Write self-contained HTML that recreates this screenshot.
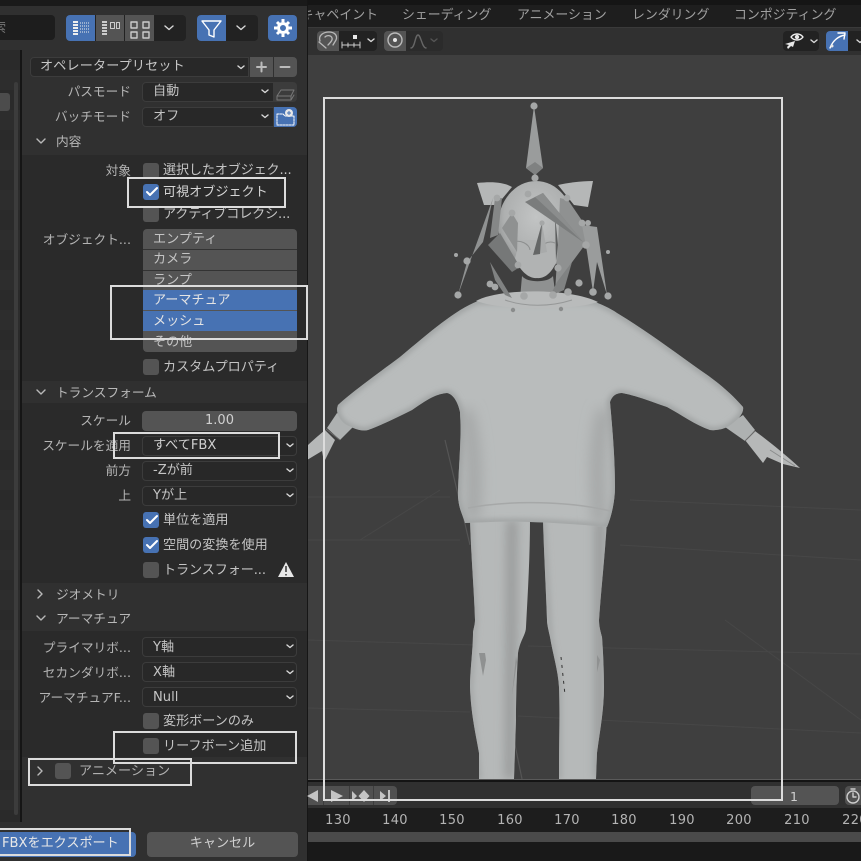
<!DOCTYPE html>
<html lang="ja"><head><meta charset="utf-8"><title>FBX</title>
<style>
html,body{margin:0;padding:0;background:#3f3f3f;}
#r{position:relative;width:861px;height:861px;overflow:hidden;font-family:"DejaVu Sans","Noto Sans CJK JP",sans-serif;font-size:13.1px;color:#c4c4c4;}
#r div{position:absolute;box-sizing:border-box;}
.t{white-space:nowrap;line-height:16px;height:16px;margin-top:1px;}
.h{font-size:12.7px;color:#b8b8b8;}
.l{white-space:nowrap;line-height:16px;height:16px;right:730px;color:#b4b4b4;text-align:right;font-size:12.7px;margin-top:1px;}
.c{left:143px;width:16px;height:16px;background:#545454;border-radius:3px;}
.k{background:#4772b3;}
.d{left:142px;width:155px;height:20px;background:#282828;border:1px solid #3c3c3c;border-radius:4px;}
.w{border:2px solid #dcdcdc;}
.tab{white-space:nowrap;line-height:16px;height:16px;top:8px;color:#a0a0a0;font-size:12.9px;}
.n{top:813px;line-height:16px;height:16px;width:40px;text-align:center;color:#b4b4b4;font-size:13px;letter-spacing:.3px;}
svg{position:absolute;left:0;top:0;}
</style></head><body><div id="r">

<!-- viewport -->
<div style="left:308px;top:0;width:553px;height:861px;background:#3f3f3f"></div>
<svg width="861" height="861" viewBox="0 0 861 861">
<defs>
<filter id="b"><feGaussianBlur stdDeviation="7"/></filter>
<filter id="b2"><feGaussianBlur stdDeviation="3"/></filter>
<filter id="b3" x="-50%" width="200%"><feGaussianBlur stdDeviation="5"/></filter>
<radialGradient id="hd" cx=".5" cy=".4" r=".6"><stop offset="0" stop-color="#c2c4c4"/><stop offset=".7" stop-color="#aeb0b0"/><stop offset="1" stop-color="#8b8d8d"/></radialGradient>
<clipPath id="sw"><path id="swp" d="M478 301C455 310 430 332 400 357C380 372 352 392 338 405C335 413 340 420 345 424C352 428 362 432 368 430C382 425 398 417 412 410C424 402 434 394 447 393C453 394 458 402 460 412C462 440 458 470 458 497C459 510 463 515 465 523C490 522 510 521 530 522C560 523 585 525 607 527C612 515 615 500 615 487C615 455 612 425 610 402C612 396 616 393 622 393C638 396 652 402 667 407C682 415 695 425 710 430C718 431 728 428 733 423C740 418 744 412 743 407C730 392 715 380 700 370C672 350 645 330 617 313C610 308 600 304 593 301Z"/></clipPath>
<clipPath id="lg"><path d="M470 520C471 555 474 590 475 620C475 625 473 630 473 633C473 650 470 670 470 687C471 715 476 735 479 753L479 779L514 779L516 720C516 695 517 670 518 653C520 640 526 635 526 627C528 590 530 555 530 520ZM543 520C544 555 546 590 547 620C547 625 549 632 550 637C553 655 558 670 559 687C560 715 559 740 559 767L559 779L596 779L597 753C600 730 604 710 604 687C604 670 603 650 602 637C600 630 599 625 599 620C601 590 605 555 607 520Z"/></clipPath>
</defs>
<rect x="308" y="27" width="553" height="28" fill="#303030"/>
<g stroke="#474747" stroke-width="1" fill="none">
<path d="M308 497H450M630 500L861 510M308 540H460M620 545L861 560M308 640L475 645M528 646L861 654M308 708L470 712M518 716L861 733M725 620L861 720M360 540L440 490"/>
</g>
<path d="M445 440L470 545M514 740L522 779" stroke="#555" stroke-width="1.200" fill="none"/>
<!-- hands -->
<path d="M325 430C318 436 312 441 307 446V460L322 451L324 462L335 440Z" fill="#b6b8b8"/>
<path d="M755 431C770 442 787 456 800 468L783 464L767 457L763 463L745 440Z" fill="#b6b8b8"/>
<path d="M770 450L795 466" stroke="#8a8c8c" fill="none"/>
<path d="M337 413L327 428L340 440L353 427Z" fill="#aeb1b1"/>
<path d="M743 415L755 430L745 441L725 427Z" fill="#aeb1b1"/>
<path d="M326 429L340 440M755 431L745 441" stroke="#6a6a6a" fill="none"/>
<!-- legs -->
<g clip-path="url(#lg)">
<rect x="460" y="515" width="160" height="265" fill="#b6b9b9"/>
<path d="M512 520L510 779M600 520L600 779" stroke="#989a9a" stroke-width="10" fill="none" filter="url(#b3)"/>
<path d="M470 520L475 620L470 687L479 779M543 520L550 637L559 687L559 779" stroke="#a2a4a4" stroke-width="5" fill="none" filter="url(#b2)"/>
<path d="M479 772H515M559 772H597" stroke="#cfd1d1" stroke-width="5" filter="url(#b2)"/>
</g>
<path d="M479 653L483 676L486 660L485 653ZM516 656L512 695L517 662ZM597 655L597 672L600 660Z" fill="#8f9191"/>
<path d="M561 657L565 695" stroke="#333" stroke-width="1" stroke-dasharray="3 5"/>
<!-- hair back + head -->
<path d="M477 183C495 181 505 183 512 187L497 205L484 205Z" fill="#b5b7b7"/>
<path d="M593 181C580 181 567 183 558 185L574 205L588 207Z" fill="#b5b7b7"/>
<ellipse cx="536" cy="226" rx="38" ry="45" fill="url(#hd)"/>
<path d="M515 258C520 272 530 279 537 278C545 279 553 272 558 258L552 240H520Z" fill="#b1b3b3"/>
<path d="M522 276C527 283 548 283 553 276L556 299C545 303 530 303 520 299Z" fill="#8f9191"/>
<path d="M512 243C520 238 530 245 530 250M555 243C548 240 540 245 540 250" stroke="#8c8e8e" fill="none"/>
<!-- sweater -->
<g clip-path="url(#sw)">
<rect x="330" y="295" width="420" height="240" fill="#b9bcbc"/>
<use href="#swp" fill="none" stroke="#9a9d9d" stroke-width="5" filter="url(#b2)"/>
<path d="M465 410C474 440 476 480 472 520M605 410C596 440 596 480 600 525" stroke="#a0a3a3" stroke-width="12" fill="none" filter="url(#b)"/>
<path d="M468 508C510 500 570 501 610 511" stroke="#a6a8a8" stroke-width="1.500" fill="none"/>
</g>
<path d="M476 301C500 288 570 288 598 302C570 311 505 311 476 301Z" fill="#b9bbbb"/>
<path d="M505 300C525 307 550 307 572 300" stroke="#969898" fill="none"/>
<!-- bones -->
<g fill="#8f9191">
<path d="M534 106L543 168L535 175L526 168Z" fill="#9a9c9c"/>
<path d="M526 168L535 175L543 168L535 162Z" fill="#7f8181"/>
<path d="M493 198L458 295L467 262L483 242L487 225Z"/>
<path d="M495 198L502 198L498 235L490 238Z" fill="#858787"/>
<path d="M512 213L518 223L517 252L502 228Z"/>
<path d="M560 198L568 200L585 225L587 242L570 265L555 292L558 245Z"/>
<path d="M582 225L597 227L607 295L597 262L593 292L587 252Z" fill="#9a9c9c"/>
<path d="M490 262L512 298L505 295L495 280Z" fill="#808282"/>
<path d="M557 282L572 262L564 290L550 296Z" fill="#808282"/>
<path d="M555 215L558 245L556 262Z" fill="#5c5e5e"/>
<path d="M500 233L488 245L512 272L520 267Z" fill="#767878"/>
<path d="M525 202L543 193L583 242Z" fill="#7a7c7c"/>
<path d="M543 193L583 242L535 197Z" fill="#8b8d8d"/>
<path d="M542 223L533 255L547 252Z" fill="#a8aaaa"/>
<path d="M542 223L533 255L540 254Z" fill="#646666"/>
</g>
<g fill="#a5a7a7">
<circle cx="534" cy="106" r="3.600"/><circle cx="535" cy="178" r="3.600"/><circle cx="497" cy="198" r="3.400"/><circle cx="528" cy="194" r="3.400"/><circle cx="567" cy="198" r="3.400"/><circle cx="512" cy="213" r="3.400"/><circle cx="542" cy="223" r="2.600"/><circle cx="582" cy="223" r="3.400"/><circle cx="588" cy="223" r="3"/><circle cx="586" cy="245" r="3.800"/><circle cx="467" cy="261" r="3.600"/><circle cx="456" cy="255" r="2"/><circle cx="608" cy="252" r="2"/><circle cx="558" cy="268" r="3.600"/><circle cx="518" cy="265" r="3.400"/><circle cx="458" cy="295" r="3.600"/><circle cx="608" cy="296" r="3.600"/><circle cx="593" cy="292" r="3.800"/><circle cx="579" cy="283" r="3.600"/><circle cx="568" cy="292" r="3.800"/><circle cx="553" cy="295" r="3.800"/><circle cx="524" cy="296" r="3.800"/><circle cx="490" cy="284" r="3.400"/><circle cx="495" cy="287" r="3.400"/><circle cx="513" cy="310" r="2.200" fill="#8a8c8c"/><circle cx="561" cy="309" r="2.200" fill="#8a8c8c"/>
</g>
<!-- timeline bars -->
<rect x="308" y="779" width="553" height="1" fill="#5a5a5a"/>
<rect x="308" y="780" width="553" height="2" fill="#141414"/>
<rect x="308" y="782" width="553" height="26" fill="#303030"/>
<rect x="308" y="808" width="553" height="24" fill="#1d1d1d"/>
<rect x="308" y="832" width="553" height="10" fill="#4a4a4a"/>
<rect x="308" y="842" width="553" height="19" fill="#191919"/>
<rect x="308" y="0" width="553" height="5" fill="#151515"/>
<rect x="308" y="5" width="553" height="22" fill="#1e1e1e"/>
<rect x="308" y="27" width="553" height="1" fill="#3a3a3a"/>
</svg>

<!-- tabs -->
<div class="tab" style="left:304px;width:74px;overflow:hidden;direction:rtl;">キャペイント</div>
<div class="tab" style="left:402px">シェーディング</div>
<div class="tab" style="left:517px">アニメーション</div>
<div class="tab" style="left:632px">レンダリング</div>
<div class="tab" style="left:734px">コンポジティング</div>

<!-- header buttons -->
<div style="left:317px;top:31px;width:60px;height:20px;background:#222;border-radius:4px"></div>
<div style="left:317px;top:31px;width:22px;height:20px;background:#545454;border-radius:4px 0 0 4px"></div>
<div style="left:384px;top:31px;width:59px;height:20px;background:#2b2b2b;border-radius:4px"></div>
<div style="left:384px;top:31px;width:22px;height:20px;background:#545454;border-radius:4px 0 0 4px"></div>
<div style="left:783px;top:31px;width:36px;height:20px;background:#222;border-radius:4px"></div>
<div style="left:826px;top:31px;width:35px;height:20px;background:#222;border-radius:4px 0 0 4px"></div>
<div style="left:826px;top:31px;width:22px;height:20px;background:#4772b3;border-radius:4px 0 0 4px"></div>

<!-- transport -->
<div style="left:308px;top:786px;width:89px;height:19px;background:#505050;border-radius:0 4px 4px 0"></div>
<div style="left:323px;top:786px;width:1px;height:19px;background:#3c3c3c"></div>
<div style="left:349px;top:786px;width:1px;height:19px;background:#3c3c3c"></div>
<div style="left:373px;top:786px;width:1px;height:19px;background:#3c3c3c"></div>
<div style="left:751px;top:786px;width:88px;height:19px;background:#545454;border-radius:4px"></div>
<div class="t" style="left:790px;top:788px;font-size:12.500px;color:#d0d0d0">1</div>
<div style="left:845px;top:786px;width:20px;height:19px;background:#505050;border-radius:4px"></div>
<div class="n" style="left:318px">130</div><div class="n" style="left:375px">140</div><div class="n" style="left:432px">150</div><div class="n" style="left:490px">160</div><div class="n" style="left:547px">170</div><div class="n" style="left:604px">180</div><div class="n" style="left:662px">190</div><div class="n" style="left:719px">200</div><div class="n" style="left:777px">210</div><div class="n" style="left:835px">220</div>

<!-- left panel -->
<div style="left:0;top:0;width:308px;height:861px;background:#303030"></div>
<div style="left:0;top:0;width:308px;height:6px;background:#1a1a1a"></div>
<div style="left:307px;top:0;width:1px;height:861px;background:#161616"></div>
<div style="left:0;top:50px;width:20px;height:772px;background:repeating-linear-gradient(#2a2a2a 0,#2a2a2a 20px,#2d2d2d 20px,#2d2d2d 40px)"></div>
<div style="left:14px;top:82px;width:4px;height:733px;background:#3c3c3c;border-radius:2px"></div>
<div style="left:0;top:93px;width:10px;height:18px;background:#4c4c4c;border-radius:0 3px 3px 0"></div>
<div style="left:20px;top:50px;width:2px;height:772px;background:#151515"></div>
<div style="left:22px;top:155px;width:285px;height:226px;background:#2a2a2a"></div>
<div style="left:22px;top:403px;width:285px;height:180px;background:#2a2a2a"></div>
<div style="left:22px;top:631px;width:285px;height:126px;background:#2a2a2a"></div>

<!-- top buttons -->
<div style="left:0;top:15px;width:55px;height:25px;background:#1d1d1d;border-radius:0 4px 4px 0"></div>
<div class="t" style="left:-7px;top:20px;color:#777">索</div>
<div style="left:66px;top:15px;width:120px;height:26px;background:#222;border-radius:4px"></div>
<div style="left:66px;top:15px;width:29px;height:26px;background:#4772b3;border-radius:4px 0 0 4px"></div>
<div style="left:96px;top:15px;width:28px;height:26px;background:#545454"></div>
<div style="left:125px;top:15px;width:29px;height:26px;background:#545454"></div>
<div style="left:197px;top:15px;width:61px;height:26px;background:#222;border-radius:4px"></div>
<div style="left:197px;top:15px;width:29px;height:26px;background:#4772b3;border-radius:4px 0 0 4px"></div>
<div style="left:268px;top:15px;width:29px;height:26px;background:#4772b3;border-radius:4px"></div>

<!-- presets -->
<div style="left:30px;top:57px;width:219px;height:20px;background:#282828;border:1px solid #3c3c3c;border-radius:4px 0 0 4px"></div>
<div class="t" style="left:40px;top:58px;color:#c8c8c8;letter-spacing:.15px">オペレータープリセット</div>
<div style="left:250px;top:57px;width:23px;height:20px;background:#545454"></div>
<div style="left:274px;top:57px;width:23px;height:20px;background:#545454;border-radius:0 4px 4px 0"></div>

<div class="l" style="top:83px">パスモード</div>
<div class="d" style="top:82px;width:132px;border-radius:4px 0 0 4px"></div>
<div class="t" style="left:153px;top:83px">自動</div>
<div style="left:274px;top:82px;width:23px;height:20px;background:#3c3c3c;border-radius:0 4px 4px 0"></div>
<div class="l" style="top:108px">バッチモード</div>
<div class="d" style="top:107px;width:132px;border-radius:4px 0 0 4px"></div>
<div class="t" style="left:153px;top:108px">オフ</div>
<div style="left:274px;top:107px;width:23px;height:20px;background:#4772b3;border-radius:0 4px 4px 0"></div>

<div class="t h" style="left:56px;top:133px">内容</div>
<div class="l" style="top:162px">対象</div>
<div class="c" style="top:163px"></div><div class="t" style="left:163px;top:162px;letter-spacing:-.15px">選択したオブジェク...</div>
<div class="c k" style="top:184px"></div><div class="t" style="left:163px;top:184px;color:#d6d6d6">可視オブジェクト</div>
<div class="c" style="top:206px"></div><div class="t" style="left:163px;top:206px;letter-spacing:-.15px">アクティブコレクシ...</div>

<div class="l" style="top:231px">オブジェクト...</div>
<div style="left:143px;top:229px;width:154px;height:123px;background:#545454;border-radius:4px"></div>
<div style="left:143px;top:249px;width:154px;height:1px;background:#333"></div>
<div style="left:143px;top:270px;width:154px;height:1px;background:#333"></div>
<div style="left:143px;top:290px;width:154px;height:20px;background:#4772b3"></div>
<div style="left:143px;top:311px;width:154px;height:20px;background:#4772b3"></div>
<div class="t" style="left:153px;top:231px">エンプティ</div>
<div class="t" style="left:153px;top:251px">カメラ</div>
<div class="t" style="left:153px;top:272px">ランプ</div>
<div class="t" style="left:153px;top:292px;color:#e4e4e4">アーマチュア</div>
<div class="t" style="left:153px;top:313px;color:#e4e4e4">メッシュ</div>
<div class="t" style="left:153px;top:334px">その他</div>
<div class="c" style="top:359px"></div><div class="t" style="left:163px;top:359px">カスタムプロパティ</div>

<div class="t h" style="left:56px;top:384px">トランスフォーム</div>
<div class="l" style="top:412px">スケール</div>
<div style="left:142px;top:411px;width:155px;height:20px;background:#545454;border-radius:4px"></div>
<div class="t" style="left:142px;width:155px;text-align:center;top:412px;color:#d0d0d0;font-size:13px">1.00</div>
<div class="l" style="top:437px">スケールを適用</div>
<div class="d" style="top:436px"></div><div class="t" style="left:153px;top:437px;color:#d0d0d0">すべてFBX</div>
<div class="l" style="top:462px">前方</div>
<div class="d" style="top:461px"></div><div class="t" style="left:153px;top:462px">-Zが前</div>
<div class="l" style="top:487px">上</div>
<div class="d" style="top:486px"></div><div class="t" style="left:153px;top:487px">Yが上</div>
<div class="c k" style="top:512px"></div><div class="t" style="left:163px;top:512px">単位を適用</div>
<div class="c k" style="top:537px"></div><div class="t" style="left:163px;top:537px">空間の変換を使用</div>
<div class="c" style="top:562px"></div><div class="t" style="left:163px;top:562px;letter-spacing:-.1px">トランスフォー...</div>

<div class="t h" style="left:56px;top:586px">ジオメトリ</div>
<div class="t h" style="left:56px;top:610px">アーマチュア</div>
<div class="l" style="top:639px">プライマリボ...</div>
<div class="d" style="top:637px"></div><div class="t" style="left:153px;top:639px">Y軸</div>
<div class="l" style="top:664px">セカンダリボ...</div>
<div class="d" style="top:662px"></div><div class="t" style="left:153px;top:664px">X軸</div>
<div class="l" style="top:689px">アーマチュアF...</div>
<div class="d" style="top:687px"></div><div class="t" style="left:153px;top:689px">Null</div>
<div class="c" style="top:713px"></div><div class="t" style="left:163px;top:713px">変形ボーンのみ</div>
<div class="c" style="top:738px"></div><div class="t" style="left:163px;top:738px">リーフボーン追加</div>
<div class="c" style="left:55px;top:763px"></div><div class="t" style="left:79px;top:763px;color:#b0b0b0">アニメーション</div>

<div style="left:-8px;top:832px;width:144px;height:25px;background:#4772b3;border-radius:4px"></div>
<div class="t" style="left:2px;top:835px;color:#e8e8e8">FBXをエクスポート</div>
<div style="left:147px;top:832px;width:151px;height:25px;background:#545454;border-radius:4px"></div>
<div class="t" style="left:147px;width:151px;text-align:center;top:835px;color:#d0d0d0">キャンセル</div>

<!-- icons -->
<svg width="861" height="861" viewBox="0 0 861 861">
<g fill="none" stroke="#d8d8d8" stroke-width="1.400" stroke-linecap="round" stroke-linejoin="round">
<path d="M165 26l4 3.500 4-3.500M237 26l4 3.500 4-3.500M238 66l3 2.500 3-2.500M262 90l3 2.500 3-2.500M262 115l3 2.500 3-2.500M287 444l3 2.500 3-2.500M287 469l3 2.500 3-2.500M287 494l3 2.500 3-2.500M287 645l3 2.500 3-2.500M287 671l3 2.500 3-2.500M287 696l3 2.500 3-2.500"/>
<path d="M37 139l4 4 4-4M37 390l4 4 4-4M37 616l4 4 4-4M38 590l4 4-4 4M38 767l4 4-4 4" stroke="#b8b8b8"/>
<path d="M811 40l3 2.500 3-2.500M857 40l3 2.500 3-2.500M368 39l3 2.500 3-2.500"/>
<path d="M202 21h19l-7 9v7l-5-2v-5z" stroke="#fff"/>
<path d="M261.500 62.500v9M257 67h9M280.500 67h9" stroke="#bbb" stroke-width="2"/>
<path d="M147 192l3 3 7-7M147 520l3 3 7-7M147 545l3 3 7-7" stroke="#fff" stroke-width="2"/>
<path d="M277 96l4-6h13l-3 6zM277 96v4h14v-4M291 100l3-5" stroke="#777" stroke-width="1"/>
<path d="M277 114h6l2 2h9v9h-17z" stroke="#fff" stroke-width="1" stroke-dasharray="2 1"/>
<path d="M320 41c-2-6 4-9 9-9s9 3 7 8l-3 5M325 37c2-2 6-2 7 1c1 2-2 5-4 7M319 42l7 6" stroke="#b8b8b8" stroke-width="1.300"/>
<path d="M342 45h18M342 42v6M348 43v4M354 43v4M360 42v6" stroke="#ccc" stroke-width="1"/>
<circle cx="395" cy="40" r="7" stroke="#bbb"/>
<path d="M411 48c4 0 4-13 7-13s4 13 8 13" stroke="#666"/>
<path d="M431 39l3 2.500 3-2.500" stroke="#555"/>
<path d="M830 48c3-8 9-12 15-13M838 33l7 0-1 6" stroke="#fff"/>
<path d="M791 37c3-4 9-4 12 0c-3 4-9 4-12 0z" stroke="#f0f0f0"/>
<circle cx="853" cy="797" r="6" stroke="#ccc"/>
<path d="M853 793v4h3M851 789h4" stroke="#ccc"/>
<circle cx="283" cy="28" r="4.500" stroke="#fff" stroke-width="3"/>
<path d="M283 19v3M283 34v3M274 28h3M289 28h3M277 22l2 2M287 32l2 2M289 22l-2 2M279 32l-2 2" stroke="#fff" stroke-width="3" stroke-linecap="butt"/>
<path d="M80 23h10M80 26h10M80 29h10M80 32h10" stroke="#eee" stroke-width="1" stroke-dasharray="1 1" stroke-linecap="butt"/>
<path d="M73 22h5M73 25h5M73 28h5M73 31h5M73 34h5" stroke="#eee" stroke-width="2" stroke-linecap="butt"/>
<path d="M102 22h5M102 25h5M102 28h5M102 31h5M102 34h5" stroke="#ccc" stroke-width="2" stroke-linecap="butt"/>
<rect x="110.500" y="22.500" width="4" height="6" stroke="#ccc" stroke-width="1"/><rect x="116.500" y="22.500" width="3" height="6" stroke="#ccc" stroke-width="1"/>
<rect x="131" y="22" width="6" height="6" stroke="#ccc"/><rect x="143" y="22" width="6" height="6" stroke="#ccc"/><rect x="131" y="32" width="6" height="6" stroke="#ccc"/><rect x="143" y="32" width="6" height="6" stroke="#ccc"/>
</g>
<g fill="#e8e8e8">
<circle cx="395" cy="40" r="2" />
<rect x="353" y="35" width="4" height="4"/>
<circle cx="289" cy="113" r="4"/>
<path d="M286 562L294 577H278Z" />
<circle cx="797" cy="37" r="2.200"/>
<path d="M785 44l10-3-2 6-2-1-3 3-1-2 2-2z"/>
<circle cx="832" cy="46" r="1.500"/>
<path d="M318 790v12l-11-6zM331 790l12 6-12 6zM352 791l5 5-5 5zM364 790l5.500 6-5.500 6-5.500-6zM380 791l6 5-6 5zM388 790h2v12h-2z" fill="#c4c4c4"/>
</g>
<path d="M286 566v6M286 574v1.500" stroke="#333" stroke-width="1.500"/>
<path d="M287 113h4M289 111v4" stroke="#4772b3" stroke-width="1"/>
<circle cx="283" cy="28" r="1.500" fill="#4772b3"/>
</svg>

<!-- annotation boxes -->
<div class="w" style="left:323px;top:97px;width:460px;height:704px"></div>
<div class="w" style="left:127px;top:177px;width:159px;height:31px"></div>
<div class="w" style="left:110px;top:285px;width:198px;height:55px"></div>
<div class="w" style="left:113px;top:432px;width:167px;height:27px"></div>
<div class="w" style="left:113px;top:731px;width:184px;height:33px"></div>
<div class="w" style="left:28px;top:758px;width:164px;height:28px"></div>
<div class="w" style="left:-4px;top:828px;width:135px;height:28px"></div>
</div></body></html>
